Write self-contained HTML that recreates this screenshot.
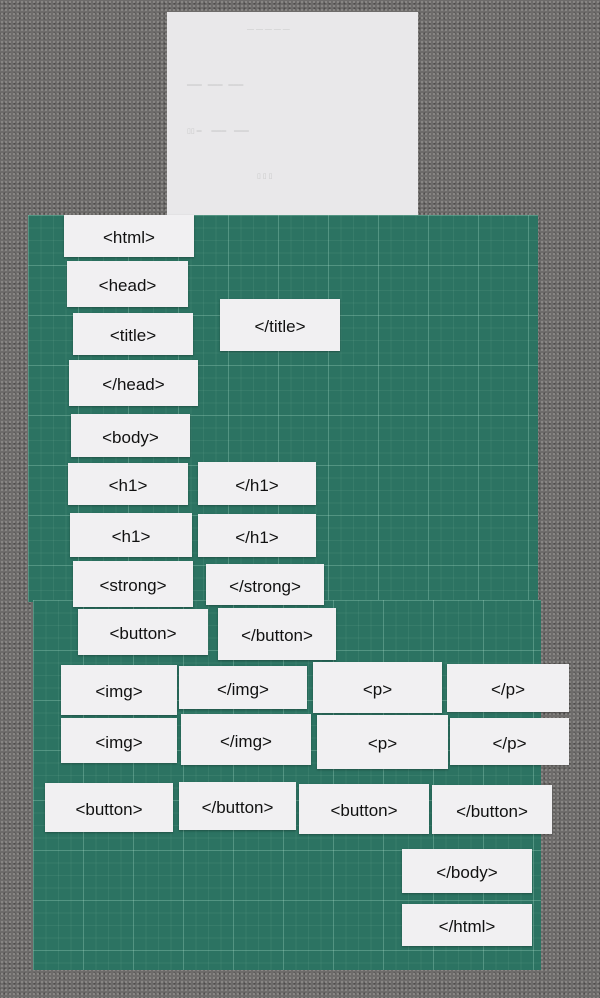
<!DOCTYPE html>
<html><head><meta charset="utf-8"><style>
body{margin:0;width:600px;height:998px;overflow:hidden;background:#6e6c6b;position:relative;font-family:"Liberation Sans",sans-serif;
background-image:radial-gradient(#8a8886 1px,transparent 1.2px),radial-gradient(#4e4c4b 1px,transparent 1.2px);background-size:4px 4px,5px 5px;background-position:0 0,2px 1px}
.mat{position:absolute;background:#2c7362;
background-image:linear-gradient(rgba(180,230,210,.22) 1px,transparent 1px),linear-gradient(90deg,rgba(180,230,210,.22) 1px,transparent 1px),linear-gradient(rgba(180,230,210,.08) 1px,transparent 1px),linear-gradient(90deg,rgba(180,230,210,.08) 1px,transparent 1px);background-size:50px 50px,50px 50px,12.5px 12.5px,12.5px 12.5px}
.paper{position:absolute;left:167px;top:12px;width:251px;height:210px;background:#e9e8ea}
.c{position:absolute;background:#f1f0f2;color:#111;font-size:17px;display:flex;align-items:center;justify-content:center;padding-top:4px;box-sizing:border-box;box-shadow:0 1px 2px rgba(0,0,0,.3)}
.t{position:absolute;color:#c8c8c8;font-size:7px}
</style></head><body>
<div class="paper"><div class="t" style="left:80px;top:14px">— — — — —</div><div class="t" style="left:20px;top:70px">═══ &nbsp; ═══ &nbsp; ═══</div><div class="t" style="left:20px;top:115px">▯▯ ═ &nbsp;&nbsp;&nbsp; ═══ &nbsp;&nbsp; ═══</div><div class="t" style="left:90px;top:160px">▯ ▯ ▯</div></div>
<div class="mat" style="left:28px;top:215px;width:510px;height:387px"></div>
<div class="mat" style="left:33px;top:600px;width:508px;height:370px"></div>
<div class="c" style="left:64px;top:215px;width:130px;height:42px">&lt;html&gt;</div>
<div class="c" style="left:67px;top:261px;width:121px;height:46px">&lt;head&gt;</div>
<div class="c" style="left:73px;top:313px;width:120px;height:42px">&lt;title&gt;</div>
<div class="c" style="left:220px;top:299px;width:120px;height:52px">&lt;/title&gt;</div>
<div class="c" style="left:69px;top:360px;width:129px;height:46px">&lt;/head&gt;</div>
<div class="c" style="left:71px;top:414px;width:119px;height:43px">&lt;body&gt;</div>
<div class="c" style="left:68px;top:463px;width:120px;height:42px">&lt;h1&gt;</div>
<div class="c" style="left:198px;top:462px;width:118px;height:43px">&lt;/h1&gt;</div>
<div class="c" style="left:70px;top:513px;width:122px;height:44px">&lt;h1&gt;</div>
<div class="c" style="left:198px;top:514px;width:118px;height:43px">&lt;/h1&gt;</div>
<div class="c" style="left:73px;top:561px;width:120px;height:46px">&lt;strong&gt;</div>
<div class="c" style="left:206px;top:564px;width:118px;height:41px">&lt;/strong&gt;</div>
<div class="c" style="left:78px;top:609px;width:130px;height:46px">&lt;button&gt;</div>
<div class="c" style="left:218px;top:608px;width:118px;height:52px">&lt;/button&gt;</div>
<div class="c" style="left:61px;top:665px;width:116px;height:50px">&lt;img&gt;</div>
<div class="c" style="left:179px;top:666px;width:128px;height:43px">&lt;/img&gt;</div>
<div class="c" style="left:313px;top:662px;width:129px;height:51px">&lt;p&gt;</div>
<div class="c" style="left:447px;top:664px;width:122px;height:48px">&lt;/p&gt;</div>
<div class="c" style="left:61px;top:718px;width:116px;height:45px">&lt;img&gt;</div>
<div class="c" style="left:181px;top:714px;width:130px;height:51px">&lt;/img&gt;</div>
<div class="c" style="left:317px;top:715px;width:131px;height:54px">&lt;p&gt;</div>
<div class="c" style="left:450px;top:718px;width:119px;height:47px">&lt;/p&gt;</div>
<div class="c" style="left:45px;top:783px;width:128px;height:49px">&lt;button&gt;</div>
<div class="c" style="left:179px;top:782px;width:117px;height:48px">&lt;/button&gt;</div>
<div class="c" style="left:299px;top:784px;width:130px;height:50px">&lt;button&gt;</div>
<div class="c" style="left:432px;top:785px;width:120px;height:49px">&lt;/button&gt;</div>
<div class="c" style="left:402px;top:849px;width:130px;height:44px">&lt;/body&gt;</div>
<div class="c" style="left:402px;top:904px;width:130px;height:42px">&lt;/html&gt;</div>
</body></html>
